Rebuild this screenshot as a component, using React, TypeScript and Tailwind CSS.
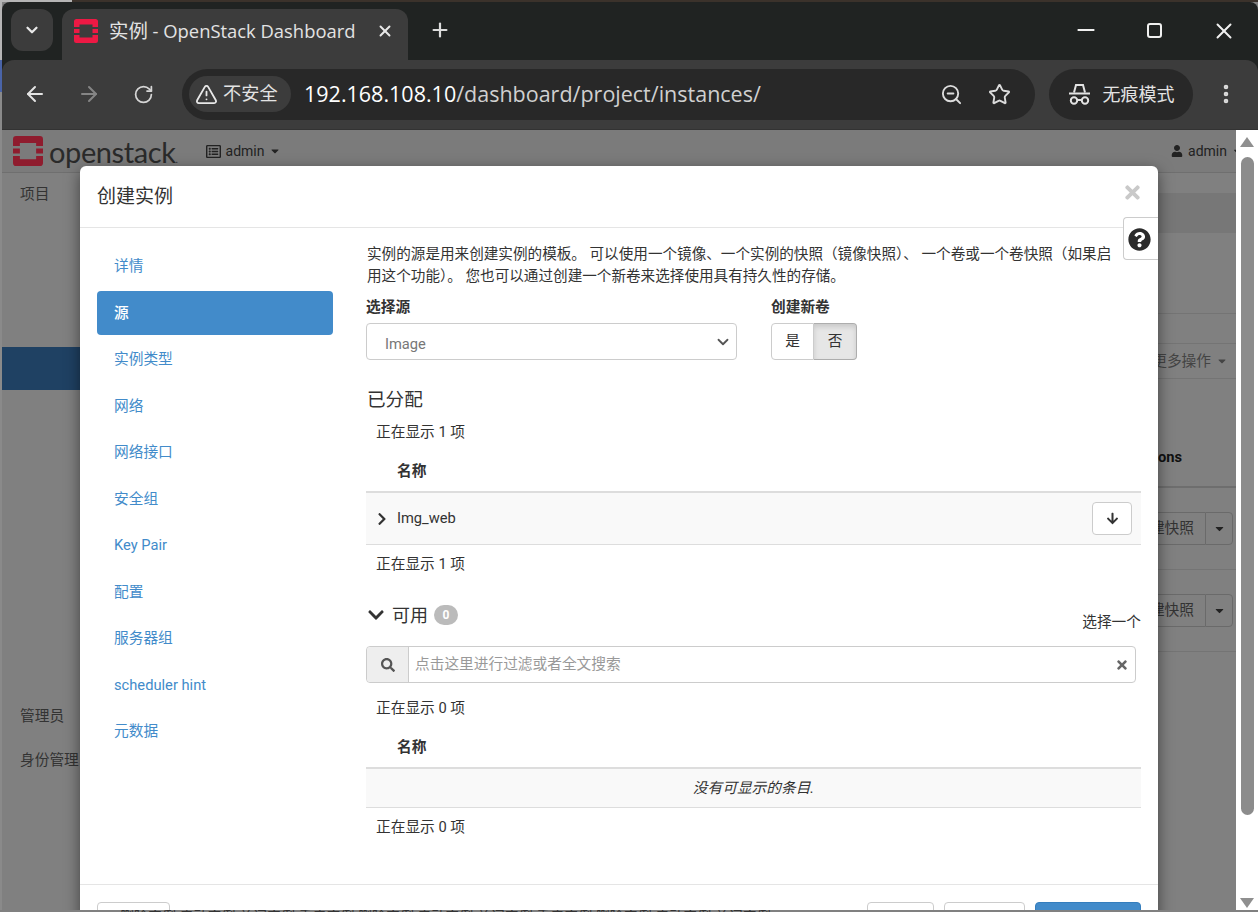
import React from "react";
import { ArrowLeft, ArrowRight, RotateCw, TriangleAlert, ZoomOut, Star, EllipsisVertical, Plus, X, ChevronDown, Minus } from "lucide-react";
import { FaQuestionCircle, FaTimes, FaSearch, FaArrowDown, FaChevronRight, FaChevronDown, FaUser, FaCaretDown, FaRegListAlt } from "react-icons/fa";

function Logo({ size, color, className }: { size: number; color: string; className?: string }) {
  return (
    <svg width={size} height={size} viewBox="0 0 24 24" className={className}>
      <path fillRule="evenodd" fill={color} d="M2.5 0H21.5A2.5 2.5 0 0 1 24 2.5V8H18.5V5.5H5.5V8H0V2.5A2.5 2.5 0 0 1 2.5 0ZM0 10H5.5V14H0ZM18.5 10H24V14H18.5ZM0 16H5.5V18.5H18.5V16H24V21.5A2.5 2.5 0 0 1 21.5 24H2.5A2.5 2.5 0 0 1 0 21.5Z" />
    </svg>
  );
}

function Incognito() {
  return (
    <svg width="23" height="23" viewBox="0 0 23 23" fill="none" stroke="#e3e3e3" strokeWidth="2">
      <path d="M6 9.5 L8 2 H15 L17 9.5" />
      <path d="M1 10.5H22" />
      <circle cx="6" cy="17.5" r="3.2" />
      <circle cx="17" cy="17.5" r="3.2" />
      <path d="M9.2 17H13.8" />
    </svg>
  );
}

const navItems = ["详情", "源", "实例类型", "网络", "网络接口", "安全组", "Key Pair", "配置", "服务器组", "scheduler hint", "元数据"];

function NavList() {
  return (
    <ul className="w-[236px] shrink-0 flex flex-col gap-[2px]">
      {navItems.map((t) => (
        <li
          key={t}
          className={
            t === "源"
              ? "h-[44.5px] flex items-center pl-[17px] rounded-[4px] bg-[#428bca] text-white font-medium"
              : "h-[44.5px] flex items-center pl-[17px] text-[#428bca]"
          }
        >
          {t}
        </li>
      ))}
    </ul>
  );
}

function Count({ n, className }: { n: number; className: string }) {
  return <div className={`h-[22px] pl-[10px] flex items-center ${className}`}>正在显示 {n} 项</div>;
}

function SourcePanel() {
  return (
    <div className="ml-[33px] w-[775px] flex flex-col -mt-[1px]">
      <p className="leading-[22px] text-[14.6px] w-[750px] pl-[1px]">
        实例的源是用来创建实例的模板。 可以使用一个镜像、一个实例的快照（镜像快照）、 一个卷或一个卷快照（如果启用这个功能）。 您也可以通过创建一个新卷来选择使用具有持久性的存储。
      </p>

      <div className="mt-[9px] flex">
        <div className="w-[371px]">
          <div className="h-[22px] flex items-center font-bold">选择源</div>
          <div className="mt-[5px] h-[37px] border border-[#ccc] rounded-[4px] flex items-center justify-between pl-[18px] pr-[4px] text-[#777]">
            <span className="mt-[5px]">Image</span>
            <ChevronDown size={18} strokeWidth={2.4} color="#555" />
          </div>
        </div>
        <div className="ml-[34px]">
          <div className="h-[22px] flex items-center font-bold">创建新卷</div>
          <div className="mt-[5px] h-[37px] flex w-[86px]">
            <div className="w-[43px] border border-[#ccc] rounded-l-[4px] flex items-center justify-center">是</div>
            <div className="w-[43px] border border-l-0 border-[#adadad] rounded-r-[4px] flex items-center justify-center bg-[#e6e6e6] shadow-[inset_0_3px_5px_rgba(0,0,0,0.125)]">否</div>
          </div>
        </div>
      </div>

      <div className="mt-[28px] h-[26px] flex items-center text-[18.6px] pl-[1px]">已分配</div>
      <Count n={1} className="mt-[7px]" />
      <div className="h-[50px] pt-[9px] pl-[31px] flex items-center font-bold border-b-2 border-[#ddd]">名称</div>
      <div className="h-[52px] bg-[#f9f9f9] border-b border-[#ddd] flex items-center pl-[9px] pr-[9px]">
        <FaChevronRight size={14} color="#333" />
        <span className="ml-[8px]">Img_web</span>
        <div className="ml-auto w-[40px] h-[33px] bg-white border border-[#ccc] rounded-[4px] flex items-center justify-center">
          <FaArrowDown size={13} color="#333" />
        </div>
      </div>
      <Count n={1} className="mt-[8px]" />

      <div className="mt-[25px] h-[30px] flex items-center justify-between">
        <div className="flex items-center text-[18px] pl-[1px]">
          <FaChevronDown size={18} color="#333" />
          <span className="ml-[7px]">可用</span>
          <span className="ml-[6px] w-[24px] h-[20px] rounded-full bg-[#bbb] text-white text-[12px] font-bold flex items-center justify-center">0</span>
        </div>
        <span className="mt-[14px]">选择一个</span>
      </div>

      <div className="mt-[16px] h-[37px] w-[770px] border border-[#ccc] rounded-[4px] flex items-center">
        <div className="w-[42px] h-full bg-[#eee] border-r border-[#ccc] rounded-l-[4px] flex items-center justify-center">
          <FaSearch size={14} color="#555" />
        </div>
        <span className="ml-[6px] text-[#999]">点击这里进行过滤或者全文搜索</span>
        <FaTimes size={14} color="#666" className="ml-auto mr-[8px] translate-x-[2px]" />
      </div>

      <Count n={0} className="mt-[14px]" />
      <div className="h-[50px] pt-[9px] pl-[31px] flex items-center font-bold border-b-2 border-[#ddd]">名称</div>
      <div className="h-[39px] bg-[#f9f9f9] border-b border-[#ddd] flex items-center justify-center italic">没有可显示的条目.</div>
      <Count n={0} className="mt-[8px]" />
    </div>
  );
}

function Modal() {
  return (
    <div className="absolute left-[78px] top-[36px] w-[1078px] h-[784px] bg-white rounded-[6px] shadow-[0_5px_15px_rgba(0,0,0,0.5)] flex flex-col text-[14.7px] text-[#333]">
      <div className="h-[62px] shrink-0 border-b border-[#e5e5e5] flex items-center justify-between pl-[17px] pr-[15px]">
        <span className="text-[19px] mt-[2px]">创建实例</span>
        <FaTimes size={21} color="#c9c9c9" className="mb-[8px]" />
      </div>
      <div className="absolute right-0 top-[51px] w-[35px] h-[43px] bg-white border border-[#ccc] border-r-0 rounded-l-[4px] flex items-center justify-center pr-[3px] pt-[2px]">
        <FaQuestionCircle size={23} color="#2b2b2b" />
      </div>
      <div className="h-[656px] shrink-0 flex pt-[16px] pl-[17px]">
        <NavList />
        <SourcePanel />
      </div>
      <div className="flex-1 border-t border-[#e5e5e5] pt-[17px] px-[17px] flex">
        <div className="w-[73px] h-[37px] border border-[#ccc] rounded-[4px]" />
        <div className="ml-auto w-[67px] h-[37px] border border-[#ccc] rounded-[4px]" />
        <div className="ml-[10px] w-[81px] h-[37px] border border-[#ccc] rounded-[4px]" />
        <div className="ml-[10px] w-[106px] h-[37px] border border-[#357ebd] bg-[#428bca] rounded-[4px]" />
      </div>
    </div>
  );
}

function PageBehind() {
  return (
    <div className="flex-1 min-w-0 bg-[#808080] flex flex-col text-[14.7px] text-[#1f1f1f]">
      <div className="h-[43px] shrink-0 bg-[#7b7b7b] border-b border-[#6f6f6f] flex items-center pl-[11px] text-[14px]">
        <Logo size={30} color="#8f1c2e" />
        <span className="ml-[6px] font-['Lato',sans-serif] text-[29px] tracking-[-0.4px] text-[#2a2a2a] leading-none">openstack<span className="text-[10px]">.</span></span>
        <span className="ml-[28px] flex items-center gap-[5px] text-[#222]">
          <FaRegListAlt size={15} />
          admin
          <FaCaretDown size={12} />
        </span>
        <span className="ml-auto flex items-center gap-[5px] text-[#222] translate-x-[6px]">
          <FaUser size={12} />
          admin
          <FaCaretDown size={10} />
        </span>
      </div>
      <div className="flex-1 flex min-h-0">
        <div className="w-[78px] shrink-0 text-[#333]">
          <div className="mt-[10px] pl-[18px] h-[22px] flex items-center">项目</div>
          <div className="mt-[142px] h-[43px] bg-[#1f4163]" />
          <div className="mt-[315px] pl-[18px] h-[22px] flex items-center">管理员</div>
          <div className="mt-[22px] pl-[18px] h-[22px] flex items-center whitespace-nowrap">身份管理</div>
        </div>
        <div className="flex-1 min-w-0 flex flex-col text-[#333]">
          <div className="h-[20px] shrink-0" />
          <div className="h-[40px] shrink-0 bg-[#777]" />
          <div className="h-[81px] shrink-0 border-b border-[#747474]" />
          <div className="h-[30px] shrink-0 border-b border-[#747474]" />
          <div className="h-[35px] shrink-0 border-b border-[#747474] flex items-center justify-end pr-[8px] gap-[5px] text-[#444]">
            <span className="whitespace-nowrap">更多操作</span>
            <FaCaretDown size={12} />
          </div>
          <div className="h-[109px] shrink-0 border-b-2 border-[#6e6e6e] flex items-end justify-end pb-[18px] pr-[54px] font-bold text-[#111]">ons</div>
          {[0, 1].map((i) => (
            <div key={i} className="h-[82px] shrink-0 border-b border-[#747474] flex items-center justify-end pr-[3px]">
              <div className="h-[33px] pl-[12px] pr-[11px] border border-r-0 border-[#6a6a6a] rounded-l-[4px] flex items-center whitespace-nowrap">创建快照</div>
              <div className="h-[33px] w-[28px] border border-[#6a6a6a] rounded-r-[4px] flex items-center justify-center">
                <FaCaretDown size={13} color="#222" />
              </div>
            </div>
          ))}
        </div>
      </div>
    </div>
  );
}

export default function App() {
  return (
    <div className="w-[1258px] h-[912px] overflow-hidden flex flex-col bg-[#808080] font-['Roboto','Noto_Sans_CJK_SC',sans-serif]">
      <div className="h-[2px] shrink-0 flex">
        <div className="w-[72px] bg-[#b5b5b5]" />
        <div className="flex-1 bg-[#3b322b]" />
      </div>
      <div className="h-[908px] shrink-0 flex">
        <div className="w-[2px] shrink-0 bg-[linear-gradient(#b5b5b5_0,#b5b5b5_58px,#4a64a8_58px,#4a64a8_90px,#8a8a8a_90px)]" />
        <div className="flex-1 min-w-0 flex flex-col rounded-t-[8px] overflow-hidden bg-[#202322]">
          <div className="h-[58px] shrink-0 flex items-start pt-[7px] pl-[9px] text-[#e3e3e3] font-['Open_Sans','Noto_Sans_CJK_SC',sans-serif]">
            <div className="w-[42px] h-[42px] rounded-[12px] bg-[#3c3c3c] flex items-center justify-center">
              <ChevronDown size={18} strokeWidth={3} color="#e8e8e8" />
            </div>
            <div className="ml-[9px] w-[346px] h-[51px] rounded-t-[12px] bg-[#3c3c3c] flex items-center pl-[12px] pr-[14px] pb-[8px]">
              <Logo size={24} color="#ed1944" />
              <span className="ml-[11px] text-[18.4px] whitespace-nowrap"><span className="text-[19.4px]">实例</span> - OpenStack Dashboard</span>
              <X size={18} strokeWidth={2.6} className="ml-auto" color="#e8e8e8" />
            </div>
            <Plus size={22} strokeWidth={2.4} className="ml-[21px] mt-[10px]" color="#dcdcdc" />
            <Minus size={26} strokeWidth={1.9} className="ml-auto mt-[8px]" color="#f0f0f0" />
            <div className="ml-[48px] mt-[14px] w-[15px] h-[15px] border-2 border-[#f0f0f0] rounded-[3px]" />
            <X size={26} strokeWidth={1.8} className="ml-[49px] mt-[9px] mr-[21px]" color="#f0f0f0" />
          </div>
          <div className="h-[70px] shrink-0 bg-[#3c3c3c] rounded-tl-[12px] rounded-tr-[12px] border-b border-[#333] flex items-center pl-[21px] pb-[1px] text-[#e3e3e3] font-['Open_Sans','Noto_Sans_CJK_SC',sans-serif]">
            <ArrowLeft size={24} strokeWidth={2} color="#e3e3e3" />
            <ArrowRight size={24} strokeWidth={2} color="#858585" className="ml-[30px]" />
            <RotateCw size={21} strokeWidth={2} color="#d5d5d5" className="ml-[32px]" />
            <div className="ml-[28px] w-[853px] h-[51px] rounded-full bg-[#282828] flex items-center pl-[7px] pr-[24px]">
              <div className="w-[102px] h-[36px] rounded-full bg-[#3c3c3c] flex items-center pl-[6px] gap-[5px] text-[18.2px]">
                <TriangleAlert size={23} strokeWidth={1.9} color="#e8e8e8" />
                不安全
              </div>
              <span className="ml-[13px] text-[21.5px] whitespace-nowrap">
                <span className="text-white">192.168.108.10</span>
                <span className="text-[#d0d0d0]">/dashboard/project/instances/</span>
              </span>
              <ZoomOut size={23} strokeWidth={2} color="#dcdcdc" className="ml-auto" />
              <Star size={23} strokeWidth={2} color="#dcdcdc" className="ml-[25px]" />
            </div>
            <div className="ml-[14px] w-[144px] h-[51px] rounded-full bg-[#282828] flex items-center justify-center gap-[12px] text-[18px]">
              <Incognito />
              无痕模式
            </div>
            <EllipsisVertical size={24} strokeWidth={2.6} color="#dcdcdc" className="ml-[21px]" />
          </div>
          <div className="flex-1 min-h-0 flex relative overflow-hidden">
            <PageBehind />
            <div className="w-[22px] shrink-0 bg-white flex flex-col items-center relative">
              <div className="mt-[7px] w-0 h-0 border-x-[7px] border-x-transparent border-b-[10px] border-b-[#8f8f8f]" />
              <div className="mt-[10px] w-[13px] h-[658px] rounded-full bg-[#8c8c8c]" />
              <div className="mt-auto mb-[2px] w-0 h-0 border-x-[7px] border-x-transparent border-t-[10px] border-t-[#8f8f8f]" />
            </div>
            <Modal />
          </div>
        </div>
      </div>
      <div className="h-[2px] shrink-0 bg-[#808080] overflow-hidden pl-[120px] text-[14px] leading-[14px] text-[#333] whitespace-nowrap">
        <div className="-mt-[1px]">删除实例 启动实例 关闭实例 重启实例 删除实例 启动实例 关闭实例 重启实例 删除实例 启动实例 关闭实例</div>
      </div>
    </div>
  );
}
